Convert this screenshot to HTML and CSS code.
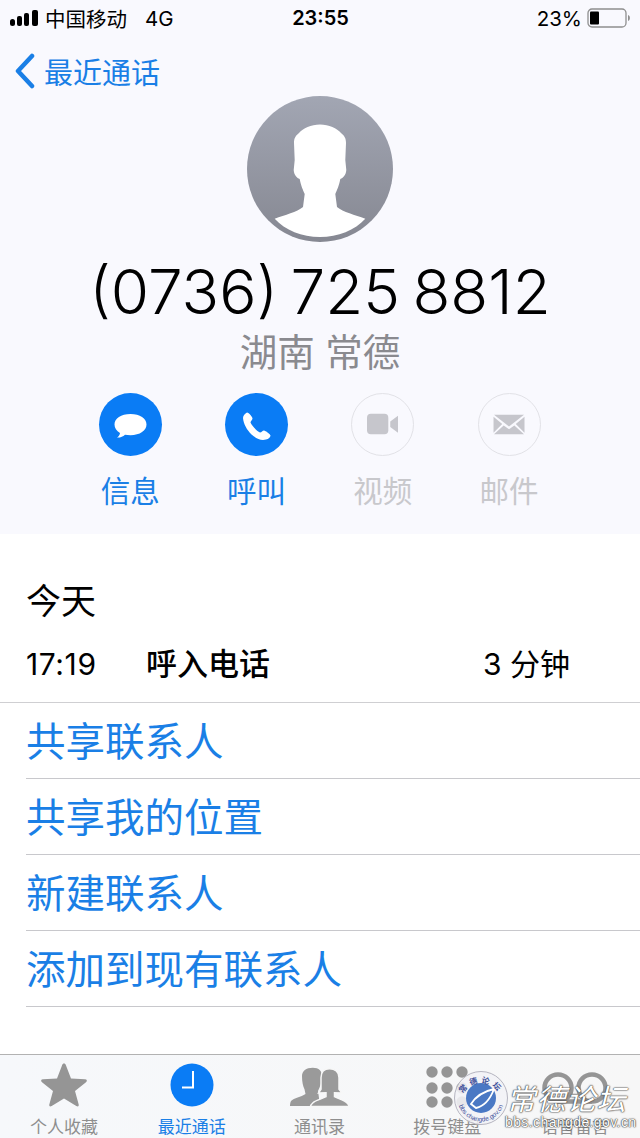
FILE: index.html
```html
<!DOCTYPE html>
<html lang="zh-CN">
<head>
    <meta charset="UTF-8">
    <title>最近通话</title>
    <link rel="stylesheet" href="styles.css">
</head>
<body>
    <div class="top">
        <div class="status">
            <div class="status-left">
                <svg class="signal" viewBox="0 0 28 16"><rect x="0" y="9" width="5" height="7" rx="2.500"/><rect x="7" y="6" width="5" height="10" rx="2"/><rect x="14" y="3" width="5" height="13" rx="2"/><rect x="22" y="0" width="6" height="16" rx="2"/></svg>
                <span>中国移动</span>
                <span class="net">4G</span>
            </div>
            <div class="clock">23:55</div>
            <div class="status-right">
                <span>23%</span>
                <svg class="battery" viewBox="0 0 44 20"><rect x="1" y="1" width="38" height="18" rx="4" fill="none" stroke="#8f8f8f" stroke-width="1.300"/><rect x="3" y="3.500" width="9" height="13" rx="1" fill="#000"/><path d="M41 7c2.500 .5 2.500 5.500 0 6z" fill="#8f8f8f"/></svg>
            </div>
        </div>
        <div class="nav">
            <svg class="back" viewBox="0 0 22 36"><path d="M18 3L4 18l14 15" fill="none" stroke="#1a7fe6" stroke-width="4.500" stroke-linecap="round" stroke-linejoin="round"/></svg>
            <span>最近通话</span>
        </div>
        <svg class="avatar" viewBox="0 0 146 146">
            <defs>
                <linearGradient id="avatarFill" x1="0" y1="0" x2="0" y2="1">
                    <stop offset="0" stop-color="#a2a6b3"/>
                    <stop offset="1" stop-color="#868892"/>
                </linearGradient>
            </defs>
            <circle cx="73" cy="73" r="73" fill="url(#avatarFill)"/>
            <path fill="#fff" d="M73 28.500C64 29 56 32 52 37C48 40 47 43 47 47L47.700 64L46.700 74C47 79 50 82 52.700 83C54 90 56 94 57.700 98L56 111C50 116 38 119 27.700 122.700C38 134 55 141 73 141C91 141 108 134 118.300 122.700C108 119 96 116 90 111L88.300 98C90 94 92 90 93.300 83C96 82 99 79 99.300 74L98.300 64L99 47C99 43 98 40 94 37C90 32 82 29 73 28.500Z"/>
        </svg>
        <div class="number">(0736) 725 8812</div>
        <div class="place">湖南 常德</div>
        <div class="actions">
            <div class="action">
                <div class="circle on">
                    <svg viewBox="0 0 63 63"><path fill="#fff" d="M31.500 21C22 21 15.500 25.500 15.500 31.500C15.500 35 17.500 38 21 40C20.700 42 19.500 43.500 18 44.500C21 44.800 24 43.500 26 41.700C27.700 42 29.500 42.200 31.500 42.200C41 42.200 47.500 37.500 47.500 31.500C47.500 25.500 41 21 31.500 21Z"/></svg>
                </div>
                <span>信息</span>
            </div>
            <div class="action">
                <div class="circle on">
                    <svg viewBox="0 0 63 63"><path fill="#fff" d="M22 19.500C20 20.500 18 22.500 18 25C18.500 31 22 37 26.500 41.500C31 45.500 36 48 41 46.500C43.500 46 45.500 44 45.500 42.500C45.500 41.500 40.500 37.500 39 37.500C37.500 37.500 36.500 39.500 35 39.500C32 38.500 26.500 32 25.500 29.500C25.500 28 27.500 27 27.500 25.500C27.500 24 24 19.500 22 19.500Z"/></svg>
                </div>
                <span>呼叫</span>
            </div>
            <div class="action off">
                <div class="circle">
                    <svg viewBox="0 0 63 63"><rect x="15.500" y="20.500" width="22" height="21" rx="4" fill="#c6c6cc"/><path d="M39.500 28.500L47.500 22.500V40L39.500 34Z" fill="#c6c6cc"/></svg>
                </div>
                <span>视频</span>
            </div>
            <div class="action off">
                <div class="circle">
                    <svg viewBox="0 0 63 63"><path fill="#c6c6cc" d="M15.500 21.500H46.500L31 33.500ZM15 23.500L24 31L15 40ZM47 23.500V40L38 31ZM15.500 41.500L25.500 32.500L31 36.500L36.500 32.500L46.500 41.500Z"/></svg>
                </div>
                <span>邮件</span>
            </div>
        </div>
    </div>

    <div class="history">
        <div class="day">今天</div>
        <div class="call">
            <span class="call-time">17:19</span>
            <span class="call-type">呼入电话</span>
            <span class="call-len">3 分钟</span>
        </div>
    </div>

    <div class="links">
        <div class="link">共享联系人</div>
        <div class="link">共享我的位置</div>
        <div class="link">新建联系人</div>
        <div class="link">添加到现有联系人</div>
    </div>

    <div class="tabs">
        <div class="tab">
            <svg viewBox="0 0 50 46"><path fill="#959595" d="M25 1.500C26 1.500 26.500 2 27 3.500L32 16.500L46 17.300C48 17.500 48.500 19 47 20.300L36 29L39.700 42.500C40 44.500 38.800 45 37.300 44L25 36.500L12.700 44C11.200 45 10 44.500 10.300 42.500L14 29L3 20.300C1.500 19 2 17.500 4 17.300L18 16.500L23 3.500C23.500 2 24 1.500 25 1.500Z"/></svg>
            <span>个人收藏</span>
        </div>
        <div class="tab active">
            <svg viewBox="0 0 50 46"><circle cx="25" cy="23" r="21.500" fill="#0a7cf5"/><path d="M26 9V25.500H15" fill="none" stroke="#fff" stroke-width="2"/></svg>
            <span>最近通话</span>
        </div>
        <div class="tab">
            <svg class="wide" viewBox="0 0 60 46"><path fill="#9a9a9a" d="M23.800 5.700C17 5.700 13 9 13 14C13 20 14 24 15.500 27.300L16.500 32C12 35 5 36 2 39C1 41 1 43 1 44H30V36L29 29C31 25 33 20 33 14C33 9 30 5.700 23.800 5.700Z"/><path fill="#9a9a9a" stroke="#f7f7f7" stroke-width="1.500" d="M40.500 6.700C35 6.700 32 10 32 15.700L32 27.300L29.500 31L37 30.700V34.700C33 37 27 38 24 40.700C22.500 42 21.500 43 21.500 44.500H60C60 42 58 40.500 55.500 39C52 37 48 36 45.500 34.700V30.700L53 31L50 27.300V15.700C50 10 46 6.700 40.500 6.700Z"/></svg>
            <span>通讯录</span>
        </div>
        <div class="tab">
            <svg viewBox="0 0 50 46"><g fill="#959595"><circle cx="10" cy="10" r="5.700"/><circle cx="25" cy="10" r="5.700"/><circle cx="40" cy="10" r="5.700"/><circle cx="10" cy="26" r="5.700"/><circle cx="25" cy="26" r="5.700"/><circle cx="40" cy="26" r="5.700"/><circle cx="10" cy="40" r="5.700"/><circle cx="25" cy="40" r="5.700"/><circle cx="40" cy="40" r="5.700"/></g></svg>
            <span>拨号键盘</span>
        </div>
        <div class="tab">
            <svg class="vm" viewBox="0 0 66 46"><g fill="none" stroke="#959595" stroke-width="4.500"><circle cx="16" cy="26" r="13.500"/><circle cx="50" cy="26" r="13.500"/><path d="M16 39.500H50"/></g></svg>
            <span>语音留言</span>
        </div>
    </div>

    <!-- forum stamp over the bottom right corner -->
    <div class="stamp">
        <svg class="seal" viewBox="0 0 54 54">
            <defs>
                <path id="ringTop" d="M6.500 30A20.700 20.700 0 0 1 47.500 30"/>
                <path id="ringBottom" d="M3.500 27A23.500 23.500 0 0 0 50.500 27"/>
            </defs>
            <circle cx="27" cy="27" r="26.500" fill="#f3f3f6" fill-opacity=".88" stroke="#b5b5c0"/>
            <circle cx="27" cy="27" r="15" fill="#4a78c4"/>
            <path d="M17 33C22 25 31 20 40 18C37 26 31 35 22 37ZM17 33L22 37" fill="none" stroke="#fff" stroke-width="1.800"/>
            <text class="seal-cn"><textPath href="#ringTop" startOffset="50%" text-anchor="middle">常德论坛</textPath></text>
            <text class="seal-url"><textPath href="#ringBottom" startOffset="50%" text-anchor="middle">bbs.changde.gov.cn</textPath></text>
        </svg>
        <div class="stamp-text">
            <div class="stamp-name">常德论坛</div>
            <div class="stamp-url">bbs.changde.gov.cn</div>
        </div>
    </div>
</body>
</html>
```

FILE: styles.css
```css
* {
    box-sizing: border-box;
}
body {
    margin: 0;
    width: 640px;
    height: 1138px;
    overflow: hidden;
    position: relative;
    background-color: #fff;
    color: #000;
    font-family: Inter, "Noto Sans CJK SC", sans-serif;
}
.top {
    height: 534px;
    background-color: #f9f9fe;
    display: flex;
    flex-direction: column;
    align-items: center;
}
.status {
    width: 100%;
    height: 36px;
    padding: 0 9px 0 10px;
    display: grid;
    grid-template-columns: 1fr auto 1fr;
    align-items: center;
    font-size: 20.500px;
}
.status-left {
    display: flex;
    align-items: center;
}
.signal {
    width: 28px;
    height: 16px;
    margin-right: 7px;
}
.net {
    margin-left: 18px;
}
.clock {
    font-weight: 600;
    font-size: 20px;
}
.status-right {
    display: flex;
    justify-content: flex-end;
    align-items: center;
    gap: 5px;
}
.battery {
    width: 44px;
    height: 20px;
}
.nav {
    width: 100%;
    height: 60px;
    padding: 9px 0 0 14px;
    display: flex;
    align-items: center;
    gap: 8px;
    color: #1a7fe6;
    font-size: 29px;
}
.back {
    width: 22px;
    height: 36px;
}
.avatar {
    width: 146px;
    height: 146px;
    display: block;
}
.number {
    margin-top: 14px;
    font-size: 62px;
    font-weight: 350;
    line-height: 72px;
    word-spacing: -5px;
    white-space: nowrap;
}
.place {
    color: #8a8a8f;
    font-size: 37.500px;
    line-height: 50px;
}
.actions {
    width: 100%;
    padding-left: 67px;
    margin-top: 15px;
    display: grid;
    grid-template-columns: repeat(4, 126.300px);
}
.action {
    display: flex;
    flex-direction: column;
    align-items: center;
    color: #1a7fe6;
    font-size: 29.500px;
    line-height: 40px;
    gap: 15px;
}
.action.off {
    color: #c8c8cc;
}
.circle {
    width: 63px;
    height: 63px;
    border-radius: 50%;
    border: 1.500px solid #e2e2e7;
    overflow: hidden;
}
.circle.on {
    border: none;
    background-color: #0a7cf5;
}
.circle svg {
    width: 100%;
    height: 100%;
    display: block;
}
.history {
    padding: 40px 0 0 26px;
}
.day {
    font-size: 35px;
    line-height: 54px;
}
.call {
    height: 74px;
    padding-bottom: 2px;
    display: flex;
    align-items: center;
    font-size: 30px;
}
.call-time {
    width: 120px;
    font-size: 30px;
    letter-spacing: .6px;
}
.call-type {
    width: 337px;
    margin-top: -5px;
    font-size: 31px;
    font-weight: 500;
}
.call-len {
    margin-top: -5px;
}
.links {
    border-top: 1px solid #cfcfd2;
}
.link {
    height: 76px;
    margin-left: 26px;
    padding-top: 2px;
    border-bottom: 1px solid #c8c8cc;
    color: #1a7fe6;
    font-size: 39.500px;
    line-height: 75px;
    white-space: nowrap;
}
.tabs {
    position: absolute;
    left: 0;
    right: 0;
    bottom: 0;
    height: 84px;
    border-top: 1px solid #b2b2b2;
    background: linear-gradient(90deg, #f6f8fb, #f7f7f7);
    display: grid;
    grid-template-columns: repeat(5, 1fr);
    padding: 7px 1px 0 0;
}
.tab {
    display: flex;
    flex-direction: column;
    align-items: center;
    color: #8e8e8e;
    font-size: 17px;
    line-height: 24px;
    gap: 7px;
}
.tab svg {
    width: 50px;
    height: 46px;
}
.tab svg.wide {
    width: 60px;
}
.tab svg.vm {
    width: 66px;
}
.tab.active {
    color: #1a7fe6;
}
.stamp {
    position: absolute;
    left: 454px;
    top: 1071px;
    display: flex;
    align-items: flex-start;
}
.seal {
    width: 54px;
    height: 54px;
    flex: none;
}
.seal-cn {
    font-size: 8px;
    font-weight: 700;
    letter-spacing: 3px;
    fill: #3d4f9a;
}
.seal-url {
    font-family: "Liberation Sans", sans-serif;
    font-size: 6.500px;
    fill: #3d4f9a;
}
.stamp-text {
    width: 123px;
    margin-left: -3px;
    padding-top: 8px;
    color: #fff;
    text-shadow: 0 0 2px #444, 0 0 1px #444, 0 0 1px #444;
    text-align: center;
}
.stamp-name {
    font-family: "Noto Sans CJK SC", sans-serif;
    font-style: italic;
    font-size: 29px;
    line-height: 36px;
    letter-spacing: 1px;
    white-space: nowrap;
}
.stamp-url {
    font-family: "Liberation Sans", sans-serif;
    font-size: 14px;
    line-height: 14px;
    letter-spacing: .4px;
    white-space: nowrap;
}
```
